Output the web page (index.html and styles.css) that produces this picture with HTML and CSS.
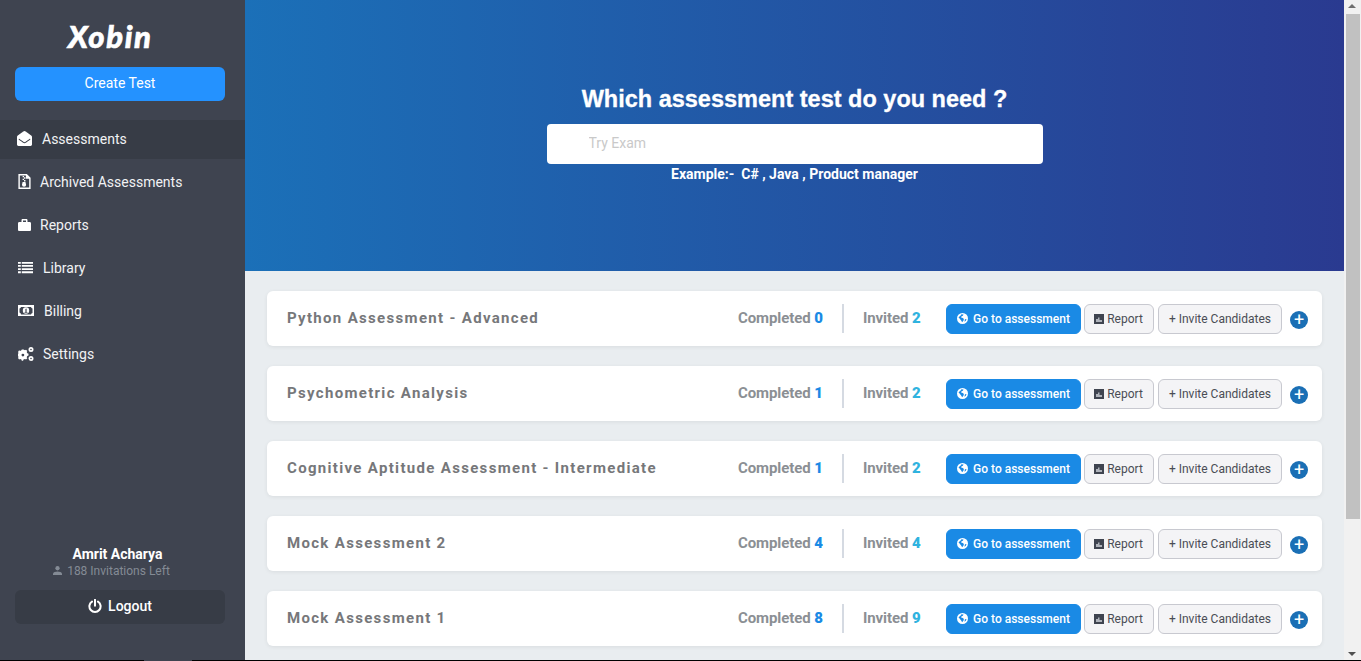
FILE: index.html
```html
<!DOCTYPE html>
<html lang="en">
<head>
  <meta charset="UTF-8">
  <title>Xobin</title>
  <link rel="stylesheet" href="styles.css">
</head>
<body>
  <svg class="defs" width="0" height="0">
    <symbol id="i-globe" viewBox="0 0 16 16">
      <path d="M8 0a8 8 0 1 0 0 16A8 8 0 0 0 8 0zM2.200 6.200 5 4l1.500-2.200 3 .2-1 2-2.200 1-.3 1.600 2.500.6 1.500 1.600-.5 2.200-2 2.600L6 11 4 8.500zM11 12l.6-2.800 2.200-.6A6 6 0 0 1 11 12.800z" fill-rule="evenodd"/>
    </symbol>
    <symbol id="i-chart" viewBox="0 0 12 12">
      <path d="M1 1h10v10H1z" fill="#3f4450"/>
      <path d="M3 9V6h2V4.500h1.500V7H9v2z" fill="#aeb2ba"/>
    </symbol>
  </svg>

  <div class="page">
    <aside class="sidebar">
      <div class="logo">Xobin</div>
      <a class="create-btn">Create Test</a>
      <nav class="nav">
        <a class="nav-item active">
          <svg class="nav-icon icon-mail" viewBox="0 0 512 512"><path d="M512 464c0 26.510-21.490 48-48 48H48c-26.510 0-48-21.490-48-48V200.724a48 48 0 0 1 18.387-37.776c24.913-19.529 45.501-35.365 164.200-121.511C199.412 29.170 232.797-.347 256 .003c23.198-.354 56.596 29.172 73.413 41.433 118.687 86.137 139.303 101.995 164.200 121.512A48 48 0 0 1 512 200.724V464zm-65.666-196.605c-2.563-3.728-7.700-4.595-11.339-1.907-22.845 16.873-55.462 40.705-105.582 77.079-16.825 12.266-50.210 41.781-73.413 41.430-23.211.344-56.559-29.143-73.413-41.430-50.114-36.370-82.734-60.204-105.582-77.079-3.639-2.688-8.776-1.821-11.339 1.907l-9.072 13.196a7.998 7.998 0 0 0 1.839 10.967c22.887 16.899 55.454 40.690 105.303 76.868 20.274 14.781 56.524 47.813 92.264 47.573 35.724.242 71.961-32.771 92.263-47.573 49.850-36.179 82.418-59.970 105.303-76.868a7.998 7.998 0 0 0 1.839-10.967l-9.071-13.196z"/></svg>
          <span class="nav-label label-assess">Assessments</span>
        </a>
        <a class="nav-item">
          <svg class="nav-icon icon-narrow" viewBox="0 0 13 16"><path d="M0 0h9l4 4v12H0zM1.500 1.500v13h10V5H8V1.500z" fill-rule="evenodd"/><path d="M4.500 2H6v1.500H4.500zM6 3.500h1.500V5H6zM4.500 5H6v1.500H4.500zM6 6.500h1.500V8H6zM4.500 8.500h3l.7 3a2.200 2.200 0 1 1-4.400 0z"/></svg>
          <span class="nav-label label-archived">Archived Assessments</span>
        </a>
        <a class="nav-item">
          <svg class="nav-icon icon-case" viewBox="0 0 13 12"><path d="M3.500 3V1.200C3.500.5 4 0 4.700 0h3.600c.7 0 1.200.5 1.200 1.200V3h2.200c.7 0 1.300.6 1.300 1.300v6.400c0 .7-.6 1.300-1.300 1.300H1.300C.6 12 0 11.400 0 10.700V4.300C0 3.600.6 3 1.300 3zM5 1.500V3h3V1.500z" fill-rule="evenodd"/></svg>
          <span class="nav-label label-reports">Reports</span>
        </a>
        <a class="nav-item">
          <svg class="nav-icon" viewBox="0 0 16 12"><path d="M0 0h3v2H0zM4 0h12v2H4zM0 3.300h3v2H0zM4 3.300h12v2H4zM0 6.700h3v2H0zM4 6.700h12v2H4zM0 10h3v2H0zM4 10h12v2H4z"/></svg>
          <span class="nav-label label-library">Library</span>
        </a>
        <a class="nav-item">
          <svg class="nav-icon icon-bill" viewBox="0 0 16 11"><path d="M0 0h16v11H0zM3 2a2 2 0 0 1-1.500 1.500v4A2 2 0 0 1 3 9.500h10a2 2 0 0 1 1.500-1.500v-4.500A2 2 0 0 1 13 2zM8 2.300a3.200 3.200 0 1 1 0 6.400 3.200 3.200 0 0 1 0-6.400zM7.400 4v3h-.8v.8h2.800V7h-.8V3.400z" fill-rule="evenodd"/></svg>
          <span class="nav-label label-billing">Billing</span>
        </a>
        <a class="nav-item">
          <svg class="nav-icon icon-cogs" viewBox="0 0 16 14"><path d="M5.500 2.500 7 3.300l1-.6 1.300 1.300-.6 1 .6 1.300 1.200.4v1.800l-1.200.4-.6 1.300.6 1-1.300 1.300-1-.6-1.500.6-.4 1.200H3.800l-.4-1.200-1.300-.6-1 .6L0 11l.5-1L0 9V7l.5-1L0 5l1.100-1.700 1 .6 1.300-.6.400-.8zM4.900 6.700a1.400 1.400 0 1 0 0 2.800 1.400 1.400 0 0 0 0-2.800zM13 0a2.500 2.500 0 1 1 0 5 2.500 2.500 0 0 1 0-5zm0 1.700a.8.800 0 1 0 0 1.600.8.800 0 0 0 0-1.600zM13 9a2.500 2.500 0 1 1 0 5 2.500 2.500 0 0 1 0-5zm0 1.700a.8.800 0 1 0 0 1.600.8.800 0 0 0 0-1.600z" fill-rule="evenodd"/></svg>
          <span class="nav-label label-settings">Settings</span>
        </a>
      </nav>
      <div class="account">
        <div class="account-name">Amrit Acharya</div>
        <div class="account-left">
          <svg class="user-icon" viewBox="0 0 10 10"><circle cx="5" cy="2.500" r="2.400"/><path d="M0 10V8.500C0 6.800 3 6 5 6s5 .8 5 2.500V10z"/></svg>
          188 Invitations Left
        </div>
        <a class="logout-btn">
          <svg class="power-icon" viewBox="0 0 14 14"><path d="M4 2.600a5.600 5.600 0 1 0 6 0M7 .8v6" fill="none" stroke="#fff" stroke-width="2" stroke-linecap="round"/></svg>
          Logout
        </a>
      </div>
    </aside>

    <main class="main">
      <section class="hero">
        <h1 class="hero-title">Which assessment test do you need ?</h1>
        <input class="hero-input" type="text" placeholder="Try Exam">
        <p class="hero-example">Example:-&nbsp; C# , Java , Product manager</p>
      </section>

      <section class="cards">
        <div class="card">
          <div class="card-title">Python Assessment - Advanced</div>
          <div class="stat stat-done">Completed <b>0</b></div>
          <div class="stat stat-invited">Invited <b>2</b></div>
          <a class="btn btn-go"><svg class="btn-icon"><use href="#i-globe"/></svg>Go to assessment</a>
          <a class="btn btn-report"><svg class="btn-icon"><use href="#i-chart"/></svg>Report</a>
          <a class="btn btn-invite">+ Invite Candidates</a>
          <span class="plus">+</span>
        </div>
        <div class="card">
          <div class="card-title">Psychometric Analysis</div>
          <div class="stat stat-done">Completed <b>1</b></div>
          <div class="stat stat-invited">Invited <b>2</b></div>
          <a class="btn btn-go"><svg class="btn-icon"><use href="#i-globe"/></svg>Go to assessment</a>
          <a class="btn btn-report"><svg class="btn-icon"><use href="#i-chart"/></svg>Report</a>
          <a class="btn btn-invite">+ Invite Candidates</a>
          <span class="plus">+</span>
        </div>
        <div class="card">
          <div class="card-title">Cognitive Aptitude Assessment - Intermediate</div>
          <div class="stat stat-done">Completed <b>1</b></div>
          <div class="stat stat-invited">Invited <b>2</b></div>
          <a class="btn btn-go"><svg class="btn-icon"><use href="#i-globe"/></svg>Go to assessment</a>
          <a class="btn btn-report"><svg class="btn-icon"><use href="#i-chart"/></svg>Report</a>
          <a class="btn btn-invite">+ Invite Candidates</a>
          <span class="plus">+</span>
        </div>
        <div class="card">
          <div class="card-title">Mock Assessment 2</div>
          <div class="stat stat-done">Completed <b>4</b></div>
          <div class="stat stat-invited">Invited <b>4</b></div>
          <a class="btn btn-go"><svg class="btn-icon"><use href="#i-globe"/></svg>Go to assessment</a>
          <a class="btn btn-report"><svg class="btn-icon"><use href="#i-chart"/></svg>Report</a>
          <a class="btn btn-invite">+ Invite Candidates</a>
          <span class="plus">+</span>
        </div>
        <div class="card">
          <div class="card-title">Mock Assessment 1</div>
          <div class="stat stat-done">Completed <b>8</b></div>
          <div class="stat stat-invited">Invited <b>9</b></div>
          <a class="btn btn-go"><svg class="btn-icon"><use href="#i-globe"/></svg>Go to assessment</a>
          <a class="btn btn-report"><svg class="btn-icon"><use href="#i-chart"/></svg>Report</a>
          <a class="btn btn-invite">+ Invite Candidates</a>
          <span class="plus">+</span>
        </div>
      </section>
    </main>

    <div class="scrollbar">
      <span class="arrow-up"></span>
      <div class="thumb"></div>
      <span class="arrow-down"></span>
    </div>
  </div>

  <div class="bottom-line">
    <span class="line-seg line-left"></span>
    <span class="line-gap"></span>
    <span class="line-seg line-right"></span>
  </div>
</body>
</html>
```

FILE: styles.css
```css
:root {
  --side: #3f4450;
  --side-dark: #373c46;
  --blue: #1a8ae5;
  --cyan: #2fb3df;
  --bg: #e9edf0;
}
* { box-sizing: border-box; }
html, body {
  margin: 0;
  height: 661px;
  overflow: hidden;
}
body {
  font-family: Roboto, Arial, sans-serif;
  font-size: 14px;
  background: var(--bg);
}
.defs { position: absolute; }
.page {
  display: flex;
  height: 660px;
}

/* sidebar */
.sidebar {
  width: 245px;
  flex: none;
  background: var(--side);
  color: #fff;
  display: flex;
  flex-direction: column;
}
.logo {
  font-family: Lato, sans-serif;
  font-weight: 900;
  font-style: italic;
  font-size: 31px;
  letter-spacing: 1.6px;
  -webkit-text-stroke: 0.6px #fff;
  line-height: 36px;
  height: 36px;
  margin: 18px 0 13px;
  padding-left: 68px;
}
.create-btn {
  display: block;
  margin: 0 20px 0 15px;
  height: 34px;
  line-height: 32px;
  text-align: center;
  background: #2492ff;
  border-radius: 6px;
  font-size: 14px;
}
.nav { margin-top: 19px; }
.nav-item {
  display: flex;
  align-items: center;
  height: 39px;
  margin-bottom: 4px;
  padding: 0 0 2px 18px;
  font-size: 14px;
  color: #f1f2f4;
}
.nav-item.active { background: var(--side-dark); }
.nav-icon {
  width: 15px;
  height: 13px;
  fill: #fff;
  flex: none;
}
.icon-mail { height: 15px; margin-left: -1px; }
.icon-narrow { width: 13px; height: 15px; }
.icon-case { width: 13px; height: 12px; }
.icon-bill { width: 16px; height: 11px; }
.icon-cogs { width: 16px; height: 14px; }
.label-assess { margin-left: 10px; }
.label-archived { margin-left: 9px; }
.label-reports { margin-left: 9px; }
.label-library { margin-left: 10px; }
.label-billing { margin-left: 10px; }
.label-settings { margin-left: 9px; }

.account {
  margin-top: auto;
  padding: 0 20px 36px 15px;
  text-align: center;
}
.account-name {
  font-weight: 700;
  font-size: 14px;
  line-height: 18px;
  padding-right: 5px;
}
.account-left {
  font-size: 12px;
  line-height: 16px;
  color: #848b95;
  margin: 0 0 11px;
  padding-right: 17px;
}
.user-icon {
  width: 9px;
  height: 9px;
  fill: #848b95;
  margin-right: 2px;
}
.logout-btn {
  display: flex;
  align-items: center;
  justify-content: center;
  height: 34px;
  padding-bottom: 2px;
  background: var(--side-dark);
  border-radius: 6px;
  font-size: 14px;
  font-weight: 500;
}
.power-icon {
  width: 14px;
  height: 14px;
  margin-right: 6px;
}

/* main */
.main {
  flex: 1;
  min-width: 0;
  overflow: hidden;
}
.hero {
  height: 271px;
  padding-top: 84px;
  background: linear-gradient(90deg, #1b70b8, #2a3a90);
  display: flex;
  flex-direction: column;
  align-items: center;
  color: #fff;
}
.hero-title {
  margin: 0;
  font-family: "Liberation Sans", Arial, sans-serif;
  font-size: 23.5px;
  line-height: 30px;
  font-weight: 700;
  -webkit-text-stroke: 0.3px #fff;
}
.hero-input {
  width: 496px;
  height: 40px;
  margin-top: 10px;
  padding: 0 0 2px 42px;
  border: 0;
  border-radius: 4px;
  background: #fff;
  font-family: Roboto, sans-serif;
  font-size: 14px;
}
.hero-input::placeholder { color: #c9c9c9; opacity: 1; }
.hero-example {
  margin: 2px 0 0;
  font-size: 14px;
  line-height: 16px;
  font-weight: 700;
}

.cards {
  padding: 20px 22px 0;
  display: flex;
  flex-direction: column;
  gap: 20px;
}
.card {
  flex: none;
  height: 55px;
  display: flex;
  align-items: center;
  padding: 0 14px 0 20px;
  background: #fff;
  border-radius: 6px;
  box-shadow: 0 1px 4px rgba(0, 0, 0, 0.07);
}
.card-title {
  flex: 1;
  font-family: Roboto, sans-serif;
  font-weight: 700;
  font-size: 15px;
  letter-spacing: 1.32px;
  color: #76777a;
  padding-bottom: 2px;
}
.stat {
  font-size: 15px;
  font-weight: 700;
  letter-spacing: -0.1px;
  color: #8b8f94;
}
.stat-done { width: 106px; height: 29px; line-height: 29px; border-right: 2px solid #d5dae2; }
.stat-done b { color: var(--blue); }
.stat-invited { width: 102px; padding: 0 0 2px 19px; }
.stat-invited b { color: var(--cyan); }

.btn {
  display: flex;
  align-items: center;
  height: 30px;
  font-size: 12px;
  border-radius: 6px;
  white-space: nowrap;
  border: 1px solid #c8c9d0;
  background: #f4f4f6;
  color: #4a4d55;
  justify-content: center;
}
.btn-icon { width: 12px; height: 12px; margin-right: 2px; flex: none; }
.btn-go {
  width: 135px;
  background: var(--blue);
  border-color: var(--blue);
  color: #fff;
  font-weight: 500;
  fill: #fff;
}
.btn-go .btn-icon { width: 11px; height: 11px; margin-right: 5px; }
.btn-report { width: 70px; margin-left: 3px; padding-right: 2px; }
.btn-invite { width: 124px; margin-left: 4px; }
.plus {
  flex: none;
  width: 18px;
  height: 18px;
  margin-left: 8px;
  margin-top: 2px;
  border-radius: 50%;
  background: #1a6fb5;
  color: #fff;
  font-size: 18px;
  line-height: 18px;
  text-align: center;
}

/* fake scrollbar */
.scrollbar {
  width: 17px;
  flex: none;
  background: #f1f1f1;
  position: relative;
  padding-top: 14px;
}
.thumb {
  margin: 0 1px 0 2px;
  height: 505px;
  background: #c1c1c1;
}
.arrow-up, .arrow-down {
  position: absolute;
  left: 4px;
  border-left: 4px solid transparent;
  border-right: 4px solid transparent;
}
.arrow-up { top: 4px; border-bottom: 4px solid #6f6f6f; }
.arrow-down { bottom: 4px; border-top: 4px solid #505050; }

.bottom-line {
  display: flex;
  height: 1px;
}
.line-seg { background: #000; }
.line-left { width: 144px; }
.line-gap { width: 48px; background: var(--side); }
.line-right { flex: 1; }
```
